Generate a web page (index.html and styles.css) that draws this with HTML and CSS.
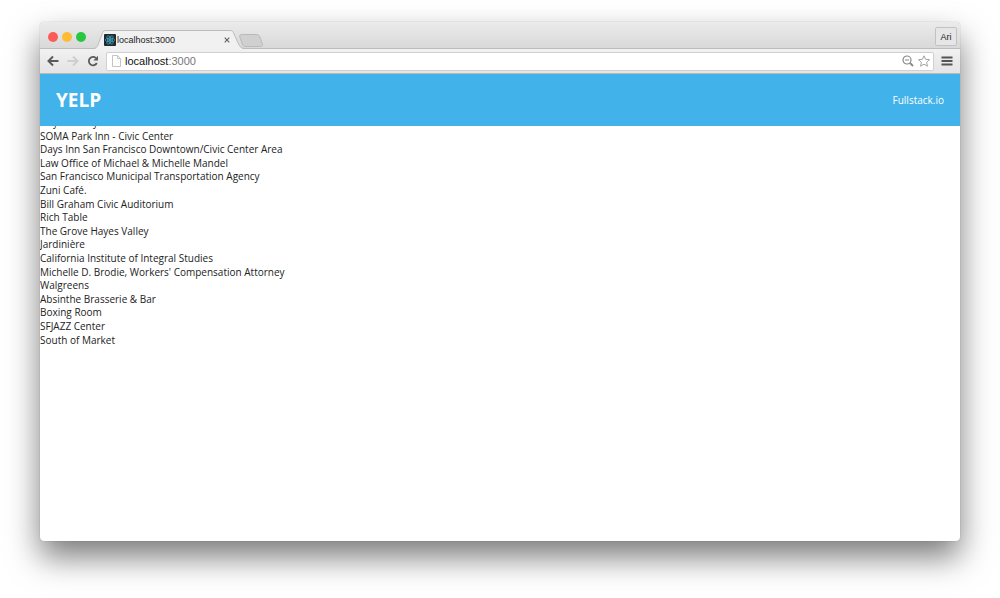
FILE: index.html
```html
<!DOCTYPE html>
<html lang="en">
<head>
  <meta charset="UTF-8">
  <meta name="viewport" content="width=device-width, initial-scale=1.0">
  <title>localhost:3000</title>
  <link rel="stylesheet" href="styles.css">
</head>
<body>
  <div class="window">
    <div class="tabbar">
      <div class="lights">
        <button type="button" class="light close" aria-label="Close window"></button>
        <button type="button" class="light minimize" aria-label="Minimize window"></button>
        <button type="button" class="light maximize" aria-label="Maximize window"></button>
      </div>
      <div class="tab">
        <svg class="tab-shape" viewBox="0 0 152 19" aria-hidden="true">
          <path d="M0 19 C3 19 4 17 5 15 L9 4 C10 1 11 .5 13 .5 H137 C139 .5 140 1 141 4 L146 15 C147 17 149 19 152 19 Z" fill="#f1f1f1"/>
          <path d="M0 18.500 C3 18.500 4 17 5 15 L9 4 C10 1 11 .5 13 .5 H137 C139 .5 140 1 141 4 L146 15 C147 17 149 18.500 152 18.500" fill="none" stroke="#bcbcbc"/>
        </svg>
        <svg class="favicon" viewBox="0 0 12 12" aria-hidden="true">
          <rect width="12" height="12" rx="1" fill="#20282e"/>
          <g fill="none" stroke="#3f9db8" stroke-width=".8">
            <ellipse cx="6" cy="6" rx="4.800" ry="1.900"/>
            <ellipse cx="6" cy="6" rx="4.800" ry="1.900" transform="rotate(60 6 6)"/>
            <ellipse cx="6" cy="6" rx="4.800" ry="1.900" transform="rotate(120 6 6)"/>
          </g>
          <circle cx="6" cy="6" r="1" fill="#4fb9d6"/>
        </svg>
        <span class="tab-title">localhost:3000</span>
        <button type="button" class="tab-close" aria-label="Close tab">
          <svg viewBox="0 0 6 6"><path d="M.7 .7 L5.300 5.300 M5.300 .7 L.7 5.300" stroke="#666" stroke-width="1.200"/></svg>
        </button>
      </div>
      <button type="button" class="new-tab" aria-label="New tab">
        <svg viewBox="0 0 24 13"><path d="M3 .5 H17 C19 .5 20 1 21 3 L23.300 10 C23.700 12 23 12.500 21.500 12.500 H7 C5 12.500 4 12 3.300 10 L.8 3 C.3 1.500 1 .5 3 .5 Z" fill="#d0d0d0" stroke="#bababa"/></svg>
      </button>
      <button type="button" class="profile">Ari</button>
    </div>

    <div class="toolbar">
      <div class="nav">
        <button type="button" aria-label="Back">
          <svg viewBox="0 0 12 12"><path d="M11.500 6 H1.800 M6 1.500 L1.500 6 L6 10.500" fill="none" stroke="#5a5a5a" stroke-width="2"/></svg>
        </button>
        <button type="button" aria-label="Forward" disabled>
          <svg viewBox="0 0 12 12"><path d="M.5 6 H10.200 M6 1.500 L10.500 6 L6 10.500" fill="none" stroke="#cecece" stroke-width="2"/></svg>
        </button>
        <button type="button" aria-label="Reload">
          <svg viewBox="0 0 12 12"><path d="M9.800 8 A4.200 4.200 0 1 1 8.800 2.900" fill="none" stroke="#5a5a5a" stroke-width="1.800"/><path d="M11 .8 V5.500 H6.300 Z" fill="#5a5a5a"/></svg>
        </button>
      </div>
      <div class="omnibox">
        <svg class="page-icon" viewBox="0 0 9 12" aria-hidden="true"><path d="M.5 .5 H5.500 L8.500 3.500 V11.500 H.5 Z M5.500 .5 V3.500 H8.500" fill="#fff" stroke="#c4c4c4"/></svg>
        <div class="address" role="textbox" aria-label="Address" contenteditable="true" spellcheck="false">localhost<span class="port">:3000</span></div>
        <button type="button" aria-label="Zoom">
          <svg viewBox="0 0 12 12"><circle cx="5" cy="5" r="4" fill="none" stroke="#888" stroke-width="1.200"/><path d="M3 5 H7" stroke="#888" stroke-width="1.200"/><path d="M8 8 L11 11" stroke="#888" stroke-width="1.800"/></svg>
        </button>
        <button type="button" aria-label="Bookmark">
          <svg viewBox="0 0 12 12"><path d="M6 .8 L7.600 4.300 L11.500 4.700 L8.600 7.300 L9.400 11.200 L6 9.200 L2.600 11.200 L3.400 7.300 L.5 4.700 L4.400 4.300 Z" fill="#fff" stroke="#999" stroke-width=".9"/></svg>
        </button>
      </div>
      <button type="button" class="menu" aria-label="Menu">
        <svg viewBox="0 0 12 12"><path d="M.5 2.500 H11.500 M.5 6 H11.500 M.5 9.500 H11.500" stroke="#555" stroke-width="2.200"/></svg>
      </button>
    </div>

    <header class="topbar">
      <h1>YELP</h1>
      <a href="#">Fullstack.io</a>
    </header>

    <main>
      <ul class="places">
        <li>Hayes Valley</li>
        <li>SOMA Park Inn - Civic Center</li>
        <li>Days Inn San Francisco Downtown/Civic Center Area</li>
        <li>Law Office of Michael &amp; Michelle Mandel</li>
        <li>San Francisco Municipal Transportation Agency</li>
        <li>Zuni Café.</li>
        <li>Bill Graham Civic Auditorium</li>
        <li>Rich Table</li>
        <li>The Grove Hayes Valley</li>
        <li>Jardinière</li>
        <li>California Institute of Integral Studies</li>
        <li>Michelle D. Brodie, Workers' Compensation Attorney</li>
        <li>Walgreens</li>
        <li>Absinthe Brasserie &amp; Bar</li>
        <li>Boxing Room</li>
        <li>SFJAZZ Center</li>
        <li>South of Market</li>
      </ul>
    </main>
  </div>
</body>
</html>
```
FILE: styles.css
```css
* { box-sizing: border-box; }

body {
  display: flex;
  min-height: 100vh;
  margin: 0;
  padding: 22px 40px 57px;
  background: #fff;
  font-family: "Open Sans", sans-serif;
}

button {
  padding: 0;
  border: 0;
  background: none;
  cursor: pointer;
}

svg { display: block; }

.window {
  flex: 1;
  min-width: 0;
  overflow: hidden;
  border-radius: 4px;
  background: #fff;
  box-shadow: 0 0 1px rgba(0, 0, 0, .4), 0 16px 32px rgba(0, 0, 0, .52);
}

/* browser chrome */
.tabbar {
  display: flex;
  align-items: flex-end;
  height: 27px;
  background: linear-gradient(#ebebeb, #d8d8d8);
  box-shadow: inset 0 -1px #bcbcbc;
  font-family: "Liberation Sans", Arial, sans-serif;
}

.lights {
  display: flex;
  align-self: center;
  gap: 4px;
  padding: 2px 7px 0 8px;
}

.light { width: 10px; height: 10px; border-radius: 50%; }
.close { background: #fc5b57; }
.minimize { background: #fdbc33; }
.maximize { background: #27c83f; }

.tab {
  position: relative;
  display: flex;
  align-items: center;
  width: 152px;
  height: 19px;
  padding: 0 15px 0 11px;
}

.tab-shape { position: absolute; inset: 0; width: 152px; height: 19px; }
.favicon { position: relative; width: 12px; height: 12px; }
.tab-title { position: relative; flex: 1; margin-left: 1px; font-size: 9px; color: #222; }
.tab-close { position: relative; }
.tab-close svg { width: 6px; height: 6px; }

.new-tab { margin: 0 0 2px -6px; }
.new-tab svg { width: 24px; height: 13px; }

.profile {
  align-self: center;
  width: 22px;
  height: 19px;
  margin: 2px 3px 0 auto;
  border: 1px solid #c2c2c2;
  border-radius: 2px;
  background: #e6e6e6;
  font: 9px "Liberation Sans", Arial, sans-serif;
  color: #222;
}

.toolbar {
  display: flex;
  align-items: center;
  gap: 7px;
  height: 25px;
  padding: 0 7px;
  border-bottom: 1px solid #c0b8b4;
  background: linear-gradient(#f1f1f1, #e4e4e4);
}

.toolbar svg { width: 12px; height: 12px; }
.nav { display: flex; gap: 8px; }

.omnibox {
  flex: 1;
  display: flex;
  align-items: center;
  gap: 4px;
  height: 19px;
  padding: 0 3px 0 5px;
  border: 1px solid #d0d0d0;
  border-radius: 2px;
  background: #fff;
}

.omnibox .page-icon { width: 9px; }

.address {
  flex: 1;
  font: 11px "Liberation Sans", Arial, sans-serif;
  color: #111;
  outline: none;
}

.port { color: #777; }

/* page */
.topbar {
  position: relative;
  display: flex;
  align-items: center;
  justify-content: space-between;
  height: 52px;
  padding: 0 16px;
  background: #41b2ea;
  color: #fff;
}

.topbar h1 { margin: 0; font-size: 19px; line-height: 24px; }
.topbar a { font-size: 10px; color: #fff; text-decoration: none; }

/* list is scrolled up under the top bar */
.places {
  margin: -10px 0 0;
  padding: 0;
  list-style: none;
  font-size: 10px;
  line-height: 1.36;
  color: #222;
}
```
